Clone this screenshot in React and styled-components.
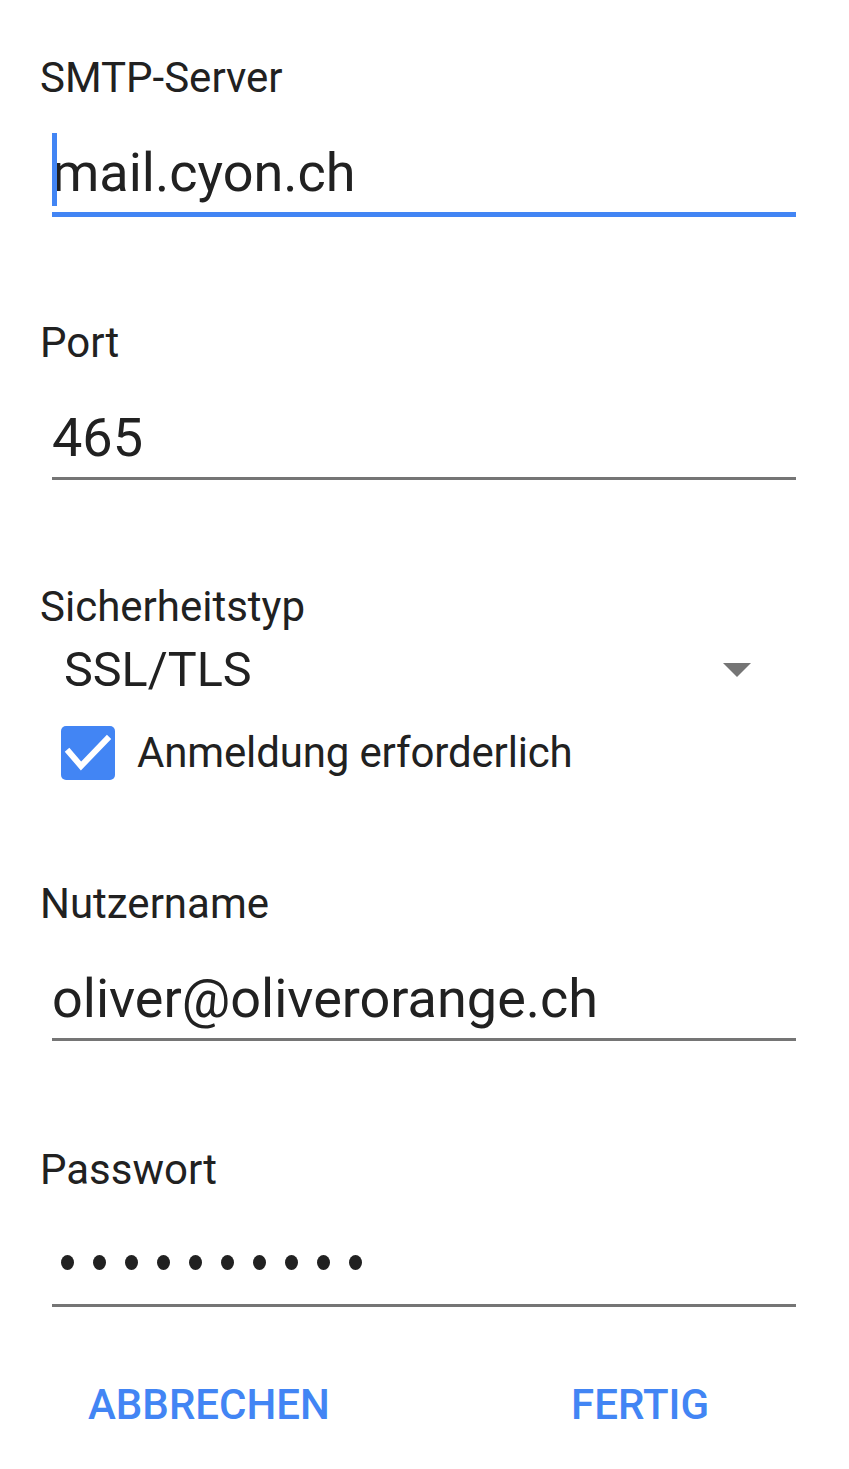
import React from "react";
import styled, { createGlobalStyle } from "styled-components";

const GlobalStyle = createGlobalStyle`
  html, body {
    margin: 0;
    padding: 0;
    background: #ffffff;
  }
  body {
    font-family: Roboto, "Noto Sans", "Liberation Sans", sans-serif;
    color: #212121;
  }
`;

const BLUE = "#4285f4";

const Page = styled.div`
  width: 849px;
  min-height: 1469px;
  box-sizing: border-box;
  padding: 53px 53px 0 40px;
  background: #ffffff;
`;

const Field = styled.div`
  margin-top: ${({ $gap }) => $gap || 0}px;
`;

const Label = styled.div`
  font-size: 42px;
  line-height: 50px;
  height: 50px;
  color: #212121;
`;

const InputBox = styled.div`
  position: relative;
  margin: 40px 0 0 12px;
  padding-bottom: 9px;
  border-bottom: 3px solid ${({ $focused }) => ($focused ? BLUE : "#757575")};
  box-shadow: ${({ $focused }) => ($focused ? `0 2px 0 ${BLUE}` : "none")};
`;

const InputText = styled.div`
  font-size: 54px;
  line-height: 60px;
  height: 60px;
  color: #212121;
  white-space: nowrap;
`;

const Cursor = styled.span`
  position: absolute;
  left: 0;
  top: -10px;
  width: 5px;
  height: 73px;
  background: ${BLUE};
`;

const Dots = styled.div`
  display: flex;
  gap: 19px;
  height: 60px;
  padding: 20px 0 0 9px;
  box-sizing: border-box;
`;

const Dot = styled.span`
  width: 13px;
  height: 15px;
  border-radius: 50%;
  background: #212121;
`;

const SelectRow = styled.div`
  display: flex;
  align-items: center;
  justify-content: space-between;
  height: 56px;
  margin: 10px 0 0 24px;
`;

const SelectValue = styled.span`
  font-size: 48.5px;
  line-height: 56px;
  color: #212121;
`;

const Caret = styled.span`
  width: 0;
  height: 0;
  margin-right: 45px;
  border-left: 14.5px solid transparent;
  border-right: 14.5px solid transparent;
  border-top: 14px solid #757575;
`;

const CheckRow = styled.label`
  display: flex;
  align-items: center;
  gap: 22px;
  height: 54px;
  margin: 28px 0 0 21px;
`;

const Box = styled.span`
  width: 54px;
  height: 54px;
  border-radius: 5px;
  background: ${BLUE};
  display: flex;
  align-items: center;
  justify-content: center;
`;

const CheckText = styled.span`
  font-size: 42px;
  line-height: 54px;
  letter-spacing: -0.15px;
  color: #212121;
`;

const Actions = styled.div`
  display: flex;
  justify-content: space-between;
  margin-top: 73px;
  padding: 0 87px 0 48px;
`;

const TextButton = styled.button`
  border: none;
  background: none;
  padding: 0;
  font-family: Roboto, "Noto Sans", "Liberation Sans", sans-serif;
  font-size: 42px;
  font-weight: 500;
  line-height: 50px;
  color: ${BLUE};
  cursor: pointer;
`;

function CheckIcon() {
  return (
    <svg width="54" height="54" viewBox="0 0 54 54">
      <path
        d="M8 26 L20 40 L46 13"
        fill="none"
        stroke="#ffffff"
        strokeWidth="6"
        strokeLinecap="square"
      />
    </svg>
  );
}

function App() {
  return (
    <>
      <GlobalStyle />
      <Page>
        <Field>
          <Label>SMTP-Server</Label>
          <InputBox $focused>
            <Cursor />
            <InputText>mail.cyon.ch</InputText>
          </InputBox>
        </Field>

        <Field $gap={103}>
          <Label>Port</Label>
          <InputBox>
            <InputText>465</InputText>
          </InputBox>
        </Field>

        <Field $gap={102}>
          <Label>Sicherheitstyp</Label>
          <SelectRow>
            <SelectValue>SSL/TLS</SelectValue>
            <Caret />
          </SelectRow>
          <CheckRow>
            <Box>
              <CheckIcon />
            </Box>
            <CheckText>Anmeldung erforderlich</CheckText>
          </CheckRow>
        </Field>

        <Field $gap={99}>
          <Label>Nutzername</Label>
          <InputBox>
            <InputText>oliver@oliverorange.ch</InputText>
          </InputBox>
        </Field>

        <Field $gap={104}>
          <Label>Passwort</Label>
          <InputBox>
            <Dots>
              {Array.from({ length: 10 }).map((_, i) => (
                <Dot key={i} />
              ))}
            </Dots>
          </InputBox>
        </Field>

        <Actions>
          <TextButton>ABBRECHEN</TextButton>
          <TextButton>FERTIG</TextButton>
        </Actions>
      </Page>
    </>
  );
}

export default App;
